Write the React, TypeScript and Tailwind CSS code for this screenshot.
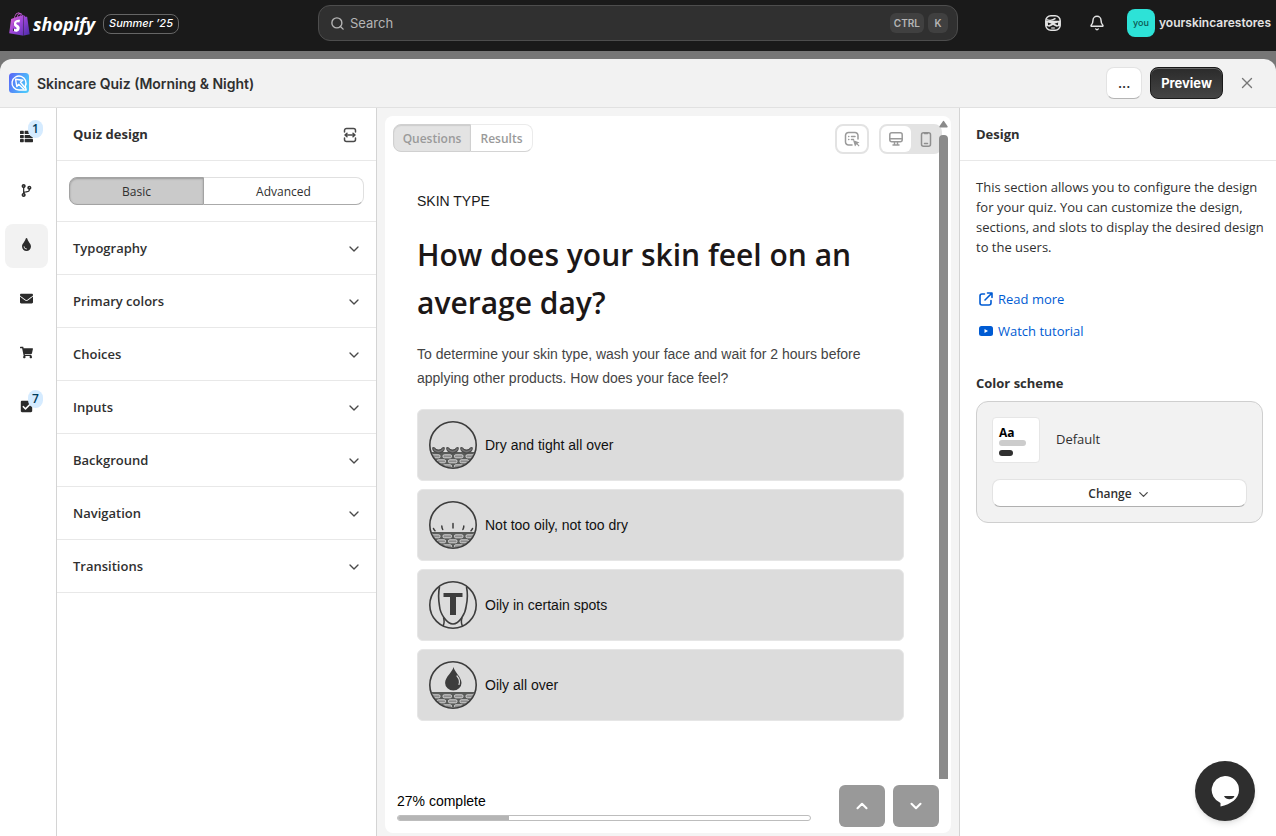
import React, { useState } from "react";
import {
  FaCheckSquare,
  FaCodeBranch,
  FaEnvelope,
  FaShopify,
  FaShoppingCart,
  FaThList,
  FaTint,
} from "react-icons/fa";
import { Bell, ChevronDown, ChevronUp, Search, X } from "lucide-react";

const INK = "#3d3d3d";

function ShopifyMark() {
  return (
    <span className="relative grid h-6 w-5 place-items-center">
      <svg width="0" height="0" className="absolute" aria-hidden="true">
        <defs>
          <linearGradient id="bag" x1="0" y1="0" x2="1" y2="1">
            <stop offset="0" stopColor="#f06bd0" />
            <stop offset="0.5" stopColor="#9a45d8" />
            <stop offset="1" stopColor="#4a2aa8" />
          </linearGradient>
        </defs>
      </svg>
      <span className="absolute left-[5px] top-[7px] h-[13px] w-[7px] bg-white" />
      <FaShopify className="relative h-6 w-[21px]" style={{ fill: "url(#bag)" }} />
    </span>
  );
}

function AppMark() {
  return (
    <svg width="20" height="20" viewBox="0 0 20 20" fill="none" aria-hidden="true">
      <defs>
        <linearGradient id="app" x1="0" y1="0" x2="1" y2="0.4">
          <stop offset="0" stopColor="#5a63f6" />
          <stop offset="1" stopColor="#4cc4fb" />
        </linearGradient>
      </defs>
      <rect width="20" height="20" rx="3.5" fill="url(#app)" />
      <path d="M10 17a7 7 0 1 1 6.2-3.7l1 3.7H10Z" stroke="#fff" strokeWidth="1.4" strokeLinejoin="round" />
      <path d="m6.600 6.300 7.200 1-2.300 2 4.500 5.500M6.600 6.300l1.200 7.200 1.900-2.200 5 4.700" stroke="#fff" strokeWidth="1.400" strokeLinejoin="round" strokeLinecap="round" />
    </svg>
  );
}

function SidekickIcon() {
  return (
    <svg width="16" height="16" viewBox="0 0 16 16" fill="none" aria-hidden="true">
      <rect x="0.8" y="0.8" width="14.4" height="14.4" rx="5" stroke="#e3e3e3" strokeWidth="1.5" />
      <path d="M1.5 4.6C4 5.600 8 5.400 10.500 3.400" stroke="#e3e3e3" strokeWidth="1.400" />
      <path d="M1 5.800h14v5.200l-3.500.8L8 9.900l-3.500 1.900L1 11V5.800Z" fill="#e3e3e3" />
      <path d="m2.800 7.400 3.800 1.400-3.500 1.500ZM13.200 7.400 9.400 8.800l3.500 1.500Z" fill="#1a1a1a" />
      <path d="M6.200 13h3.600" stroke="#e3e3e3" strokeWidth="1.200" />
    </svg>
  );
}

function ExpandIcon() {
  return (
    <svg width="14" height="16" viewBox="0 0 14 16" fill="none" stroke="#4a4a4a" strokeWidth="1.500" strokeLinecap="round" strokeLinejoin="round" aria-hidden="true">
      <path d="M1.500 5V3.500a2 2 0 0 1 2-2h7a2 2 0 0 1 2 2V5M1.500 11v1.500a2 2 0 0 0 2 2h7a2 2 0 0 0 2-2V11" />
      <path d="M2 8h10M4 6.200 2 8l2 1.800M10 6.200 12 8l-2 1.800" />
    </svg>
  );
}

function SelectorIcon() {
  return (
    <svg width="16" height="16" viewBox="0 0 16 16" fill="none" stroke="#9a9a9a" strokeWidth="1.500" strokeLinecap="round" aria-hidden="true">
      <path d="M8 14H4.500A3 3 0 0 1 1.500 11V4.500a3 3 0 0 1 3-3H11a3 3 0 0 1 3 3V8" />
      <path d="M4.700 5.500h.1M7.500 5.500h3.500M4.700 8.500h.1M7.500 8.500h2" />
      <path d="m9 9 6.500 2.500-2 1 2 2.300-.8.700-2-2.300-1.700 2.200Z" fill="#9a9a9a" stroke="none" />
    </svg>
  );
}

function DesktopIcon() {
  return (
    <svg width="14" height="14" viewBox="0 0 14 14" fill="none" stroke="#9a9a9a" strokeWidth="1.500" strokeLinecap="round" aria-hidden="true">
      <rect x="0.800" y="0.800" width="12.400" height="9" rx="2" />
      <path d="M1 6.800h12M5.500 10v2.500M8.500 10v2.500M4 13h6" />
    </svg>
  );
}

function PhoneIcon() {
  return (
    <svg width="12" height="15" viewBox="0 0 12 15" fill="none" stroke="#8f8f8f" strokeWidth="1.500" strokeLinecap="round" aria-hidden="true">
      <rect x="1.500" y="0.800" width="9" height="13.400" rx="2" />
      <path d="M4.500 1.500h3M4.500 11.500h3" />
    </svg>
  );
}

function ExternalIcon() {
  return (
    <svg width="14" height="14" viewBox="0 0 14 14" fill="none" stroke="#005bd3" strokeWidth="1.600" strokeLinecap="round" strokeLinejoin="round" aria-hidden="true">
      <path d="M5.500 2H3a2 2 0 0 0-2 2v7a2 2 0 0 0 2 2h7a2 2 0 0 0 2-2V8.500" />
      <path d="M8.500 1H13v4.500M12.800 1.200 6 8" />
    </svg>
  );
}

function VideoIcon() {
  return (
    <svg width="14" height="10" viewBox="0 0 14 10" aria-hidden="true">
      <rect width="14" height="10" rx="2.500" fill="#005bd3" />
      <path d="M5.500 3v4L9 5Z" fill="#fff" />
    </svg>
  );
}

function Bricks({ id }: { id: string }) {
  return (
    <>
      <clipPath id={id}>
        <circle cx="24" cy="24" r="22.500" />
      </clipPath>
      <g clipPath={`url(#${id})`}>
        <rect x="0" y="31" width="48" height="17" fill="#595b59" />
        {[0, 1, 2].map((row) =>
          [0, 1, 2, 3, 4].map((col) => (
            <rect
              key={`${row}-${col}`}
              x={(row % 2 ? -3.500 : 2.500) + col * 11.500}
              y={33.800 + row * 5}
              width="8.500"
              height="3"
              rx="1.200"
              fill="#8c8c8c"
              stroke="#d2d2d2"
              strokeWidth="1"
            />
          )),
        )}
      </g>
    </>
  );
}

function SkinIcon({ kind }: { kind: string }) {
  return (
    <svg width="48" height="48" viewBox="0 0 48 48" fill="none" className="shrink-0" aria-hidden="true">
      {kind !== "zone" && <Bricks id={`clip-${kind}`} />}
      {kind === "dry" &&
        [9.500, 23.500, 37.500].map((x) => (
          <path
            key={x}
            d={`M${x - 5.500} 26.500c1.200 0 2.200.8 2.700 1.800 1.800 1 3.800 1 5.600 0 .5-1 1.500-1.800 2.700-1.800.8 1.500-.5 3.500-2 4.300-2 1.500-5 1.500-7 0-1.500-.8-2.800-2.800-2-4.300Z`}
            fill="#747474"
            stroke="#484848"
            strokeWidth="1.100"
          />
        ))}
      {kind === "normal" && (
        <path d="M4.500 27.500c.3 1 .8 1.600 1.500 2.300M12.800 25c0 1.400.3 2.400.9 3.500M24 22.500V27M34.800 25c0 1.400-.3 2.400-.9 3.500M43.500 27.500c-.3 1-.8 1.600-1.500 2.300" stroke={INK} strokeWidth="1.500" strokeLinecap="round" />
      )}
      {kind === "zone" && (
        <>
          <path d="M10.500 6C9 13 9.500 19 10.500 25c.6 8 7.500 18 13.500 18s12.500-10 13.200-18C38.500 19 39 13 37.500 6" stroke={INK} strokeWidth="1.600" />
          <path d="M14.500 36.500c1 3.500 1 6-.5 8.500M33 36.500c-1 3.500-1 6 .5 8.500" stroke={INK} strokeWidth="1.500" />
          <path d="M14.500 12h19v4H27v18h-6V16h-6.500Z" fill={INK} />
        </>
      )}
      {kind === "oily" && (
        <>
          <path d="M24.500 6c1 5 8 10 8 16a8.200 7.500 0 0 1-16.400 0c0-6 7.400-11 8.400-16Z" fill={INK} />
          <path d="M28 15c2.500 3 3.200 5.500 2 8.500" stroke="#dcdcdc" strokeWidth="1.200" strokeLinecap="round" />
        </>
      )}
      <circle cx="24" cy="24" r="23.200" stroke={INK} strokeWidth="1.600" />
    </svg>
  );
}

function ChatIcon() {
  return (
    <svg width="28" height="31" viewBox="0 0 28 31" aria-hidden="true">
      <path d="M14 0a14 14 0 0 1 14 14c0 9-8 14-18.500 16.500V27A14 14 0 0 1 14 0Z" fill="#fff" />
      <path d="M13 20h10.500c-1.500 4.200-8.500 4.400-10.500 0Z" fill="#2e2e2e" />
    </svg>
  );
}

const railItems = [
  { label: "Questions", Icon: FaThList, badge: "1" },
  { label: "Logic", Icon: FaCodeBranch },
  { label: "Design", Icon: FaTint, active: true },
  { label: "Email", Icon: FaEnvelope },
  { label: "Cart", Icon: FaShoppingCart },
  { label: "Tasks", Icon: FaCheckSquare, badge: "7" },
];

const sections = ["Typography", "Primary colors", "Choices", "Inputs", "Background", "Navigation", "Transitions"];

const choices = [
  { kind: "dry", label: "Dry and tight all over" },
  { kind: "normal", label: "Not too oily, not too dry" },
  { kind: "zone", label: "Oily in certain spots" },
  { kind: "oily", label: "Oily all over" },
];

function TopBar() {
  return (
    <header className="grid h-[51px] shrink-0 grid-cols-[1fr_minmax(0,640px)_1fr] items-center bg-[#1a1a1a] pb-[5px] font-['Inter',sans-serif]">
      <div className="flex items-center pl-[9px] pt-px">
        <ShopifyMark />
        <span className="ml-1 font-['Open_Sans',sans-serif] text-[18px] font-bold italic leading-6 text-white">shopify</span>
        <span className="ml-2 flex h-5 items-center rounded-lg border border-[#666] px-[5px] text-[11px] font-medium italic text-white">
          Summer ’25
        </span>
      </div>
      <label className="flex h-9 items-center rounded-xl border border-[#4d4d4d] bg-[#303030] pl-[11px] pr-[9px]">
        <Search size={15} strokeWidth={2.2} color="#b5b5b5" />
        <input type="text" aria-label="Search" placeholder="Search" className="ml-[5px] min-w-0 grow bg-transparent pt-px text-[13px] text-[#b5b5b5] outline-none placeholder:text-[#b5b5b5]" />
        <kbd className="flex h-5 items-center rounded-md bg-[#404040] px-1 font-['Inter',sans-serif] text-[10px] font-semibold text-[#b5b5b5]">CTRL</kbd>
        <kbd className="ml-1 flex h-5 w-5 items-center justify-center rounded-md bg-[#404040] font-['Inter',sans-serif] text-[10px] font-semibold text-[#b5b5b5]">K</kbd>
      </label>
      <div className="flex items-center justify-end pr-[5px]">
        <button aria-label="Assistant" className="mr-7">
          <SidekickIcon />
        </button>
        <button aria-label="Notifications" className="mr-[22px]">
          <Bell size={16} strokeWidth={2.2} color="#e3e3e3" />
        </button>
        <button className="flex items-center gap-1">
          <span className="grid h-7 w-7 place-items-center rounded-lg bg-[#2de2d7] text-[9px] font-medium text-[#0c5752]">you</span>
          <span className="text-[12px] font-semibold text-[#e3e3e3]">yourskincarestores</span>
        </button>
      </div>
    </header>
  );
}

function ModalHeader() {
  return (
    <div className="flex h-[49px] shrink-0 items-center rounded-t-xl border-b border-[#e1e1e1] bg-[#f2f2f2] pl-[9px] pr-5 font-['Inter',sans-serif]">
      <AppMark />
      <h1 className="ml-2 grow text-[14px] font-semibold text-[#303030]">Skincare Quiz (Morning &amp; Night)</h1>
      <button aria-label="More actions" className="h-8 w-9 rounded-lg border border-[#e3e3e3] border-b-[#b5b5b5] bg-white pt-px text-[13px] font-semibold text-[#303030]">...</button>
      <button className="ml-2 h-8 rounded-lg border border-[#1a1a1a] bg-linear-to-b from-[#2b2b2b] to-[#454545] px-[10px] pt-px text-[13px] font-bold text-white shadow-[inset_0_1px_0_#666]">Preview</button>
      <button aria-label="Close" className="ml-[15px]">
        <X size={18} strokeWidth={1.8} color="#777" />
      </button>
    </div>
  );
}

function Rail() {
  return (
    <nav className="flex w-[57px] shrink-0 flex-col gap-[10px] border-r border-[#d4d4d4] bg-white pl-[5px] pt-2">
      {railItems.map(({ label, Icon, badge, active }) => (
        <button key={label} aria-label={label} className={`relative grid h-11 w-[43px] place-items-center rounded-lg pb-1 ${active ? "bg-[#f2f2f2]" : ""}`}>
          <Icon size={13} color="#2b2b2b" />
          {badge && (
            <span className="absolute left-[23px] top-1 grid h-[18px] w-[15px] place-items-center rounded-full bg-[#d5ebff] text-[12px] font-semibold text-[#003a5a]">{badge}</span>
          )}
        </button>
      ))}
    </nav>
  );
}

function DesignPanel() {
  const [mode, setMode] = useState("Basic");
  return (
    <aside className="w-[320px] shrink-0 border-r border-[#d4d4d4] bg-white text-[#303030]">
      <div className="flex h-[53px] items-center justify-between border-b border-[#e8e8e8] pl-4 pr-[19px] pt-[2px]">
        <h2 className="text-[13px] font-bold">Quiz design</h2>
        <button aria-label="Expand panel">
          <ExpandIcon />
        </button>
      </div>
      <div className="border-b border-[#e8e8e8] px-3 py-4">
        <div className="grid h-7 grid-cols-[135fr_160fr] text-[12px]">
          {["Basic", "Advanced"].map((name) => (
            <button
              key={name}
              aria-pressed={mode === name}
              onClick={() => setMode(name)}
              className={`border pt-[2px] first:rounded-l-lg last:rounded-r-lg last:border-l-0 ${
                mode === name ? "border-[#a3a3a3] bg-[#cacaca] shadow-[inset_0_1px_2px_#999]" : "border-[#e0e0e0] border-b-[#aaa] bg-white"
              }`}
            >
              {name}
            </button>
          ))}
        </div>
      </div>
      {sections.map((name) => (
        <button key={name} className="flex h-[53px] w-full items-center justify-between border-b border-[#e8e8e8] pl-4 pr-[14px] pt-[2px] text-[13px] font-semibold">
          {name}
          <ChevronDown size={16} strokeWidth={2} color="#4a4a4a" />
        </button>
      ))}
    </aside>
  );
}

function Preview() {
  return (
    <main className="flex min-w-0 grow bg-[#f4f4f4] px-2 pb-[3px] pt-2">
      <section className="relative flex min-w-0 grow flex-col rounded-lg bg-white">
        <div className="flex items-start justify-between py-2 pl-2 pr-[9px] font-['Open_Sans','Noto_Sans',sans-serif]">
          <div className="flex h-7 text-[12px] font-semibold text-[#9a9a9a]">
            <button className="w-[78px] rounded-l-lg border border-[#d0d0d0] bg-[#e3e3e3] pt-[2px] shadow-[inset_0_1px_1px_#ccc]">Questions</button>
            <button className="w-[62px] rounded-r-lg border border-l-0 border-[#ebebeb] border-b-[#d4d4d4] bg-white pt-[2px]">Results</button>
          </div>
          <div className="flex gap-[10px]">
            <button aria-label="Select element" className="grid h-[30px] w-[34px] place-items-center rounded-lg border-2 border-[#e3e3e3]">
              <SelectorIcon />
            </button>
            <div className="flex h-[30px] rounded-lg border-2 border-[#e3e3e3] bg-[#e3e3e3]">
              <button aria-label="Desktop preview" className="grid w-[30px] place-items-center rounded-md bg-white">
                <DesktopIcon />
              </button>
              <button aria-label="Mobile preview" className="grid w-[29px] place-items-center">
                <PhoneIcon />
              </button>
            </div>
          </div>
        </div>
        <div className="grow pl-8 pr-[47px] pt-[27px] font-['Liberation_Sans',Arial,sans-serif] text-[14px]">
          <p className="leading-6 text-[#1a1a1a]">SKIN TYPE</p>
          <h2 className="mt-[18px] font-['Open_Sans','Noto_Sans',sans-serif] text-[30px] font-semibold leading-[48px] text-[#1c1717]">
            How does your skin feel on an average day?
          </h2>
          <p className="mt-[15px] leading-6 text-[#444]">
            To determine your skin type, wash your face and wait for 2 hours before applying other products. How does your face feel?
          </p>
          <div className="mt-[19px] flex flex-col gap-2">
            {choices.map(({ kind, label }) => (
              <button key={kind} className="flex h-[72px] items-center gap-2 rounded-md border border-[#e6e6e6] bg-[#dcdcdc] pl-[11px] text-left text-[#111]">
                <SkinIcon kind={kind} />
                {label}
              </button>
            ))}
          </div>
        </div>
        <footer className="flex items-start gap-7 pb-[6px] pl-3 pr-3 font-['Liberation_Sans',Arial,sans-serif]">
          <div className="grow pt-[6px]">
            <p id="progress" className="text-[14px] leading-5 text-black">27% complete</p>
            <div role="progressbar" aria-labelledby="progress" aria-valuenow={27} className="mt-1 h-[6px] overflow-hidden rounded-full border border-[#bdbdbd]">
              <div className="h-full bg-[#b5b5b5]" style={{ width: "27%" }} />
            </div>
          </div>
          <div className="flex gap-2">
            <button aria-label="Previous question" className="grid h-[42px] w-[46px] place-items-center rounded-md bg-[#999]">
              <ChevronUp size={18} strokeWidth={2.8} color="#fff" />
            </button>
            <button aria-label="Next question" className="grid h-[42px] w-[46px] place-items-center rounded-md bg-[#999]">
              <ChevronDown size={18} strokeWidth={2.8} color="#fff" />
            </button>
          </div>
        </footer>
        <div className="absolute bottom-[54px] right-[3px] top-1 flex w-[9px] flex-col gap-[7px]">
          <svg width="9" height="8" viewBox="0 0 9 8" aria-hidden="true">
            <path d="M4.500 0.800Q5 .8 8.700 6.500 8.700 7.500 8 7.500H1Q.3 7.500.3 6.500 4 .8 4.500.8Z" fill="#8a8a8a" />
          </svg>
          <div className="grow rounded-t bg-[#8a8a8a]" />
        </div>
      </section>
    </main>
  );
}

function InfoPanel() {
  return (
    <aside className="w-[317px] shrink-0 border-l border-[#d4d4d4] bg-white text-[13px] text-[#303030]">
      <div className="flex h-[53px] items-center border-b border-[#e8e8e8] px-4 pt-[2px]">
        <h2 className="font-bold">Design</h2>
      </div>
      <div className="pb-4 pl-4 pr-[13px] pt-4">
        <p className="-mr-2 leading-5">
          This section allows you to configure the design for your quiz. You can customize the design, sections, and slots to display the desired design to the users.
        </p>
        <div className="mt-8 flex flex-col items-start gap-3 pl-[3px] leading-5 text-[#005bd3]">
          <a href="#read-more" className="flex items-center gap-[5px]">
            <ExternalIcon />
            Read more
          </a>
          <a href="#tutorial" className="flex items-center gap-[5px]">
            <VideoIcon />
            Watch tutorial
          </a>
        </div>
        <h3 className="mt-8 font-bold leading-5">Color scheme</h3>
        <div className="mt-2 rounded-xl border border-[#cfcfcf] bg-[#f2f2f2] p-[15px]">
          <div className="flex items-center gap-4">
            <div className="h-[46px] w-12 rounded border border-[#e6e6e6] bg-white px-[6px] pt-2">
              <div className="text-[12px] font-bold leading-[14px] text-black">Aa</div>
              <div className="h-[6px] w-[27px] rounded-full bg-[#ccc]" />
              <div className="mt-1 h-[6px] w-[14px] rounded-full bg-[#303030]" />
            </div>
            <span>Default</span>
          </div>
          <button className="mt-4 flex h-7 w-full items-center justify-center gap-1 rounded-lg border border-[#e3e3e3] border-b-[#b0b0b0] bg-white pt-[2px] text-[12px] font-semibold">
            Change
            <ChevronDown size={15} strokeWidth={2} color="#4a4a4a" />
          </button>
        </div>
      </div>
    </aside>
  );
}

export default function App() {
  return (
    <div className="relative flex min-h-screen flex-col bg-[#767676] font-['Open_Sans','Noto_Sans',sans-serif]">
      <TopBar />
      <div className="mt-2 flex grow flex-col">
        <ModalHeader />
        <div className="flex grow">
          <Rail />
          <DesignPanel />
          <Preview />
          <InfoPanel />
        </div>
      </div>
      <button aria-label="Open chat" className="absolute bottom-[15px] right-[21px] grid h-[60px] w-[60px] place-items-center rounded-full bg-[#2e2e2e] shadow-md">
        <ChatIcon />
      </button>
    </div>
  );
}
